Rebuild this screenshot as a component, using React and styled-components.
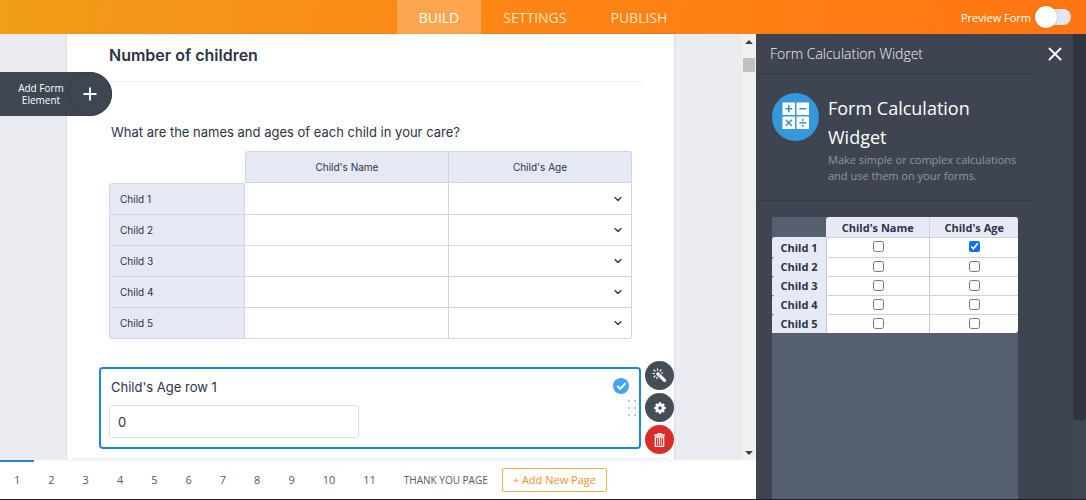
import React, { useState } from 'react';
import styled, { createGlobalStyle } from 'styled-components';
import { Check, ChevronDown, Plus, X } from 'lucide-react';

const GlobalStyle = createGlobalStyle`
  * {
    box-sizing: border-box;
  }

  body {
    margin: 0;
    font-family: 'Open Sans', 'Noto Sans', sans-serif;
    color: #2c3345;
  }

  button, input, select {
    font: inherit;
    color: inherit;
    margin: 0;
  }

  button {
    padding: 0;
    border: 0;
    background: none;
    cursor: pointer;
  }
`;

const Page = styled.div`
  min-height: 100vh;
  display: flex;
  flex-direction: column;
  border-bottom: 1px solid #1b1d2b;
`;

const Header = styled.header`
  display: grid;
  grid-template-columns: 1fr auto 1fr;
  height: 34px;
  padding-right: 15px;
  padding-left: 15px;
  background: linear-gradient(100deg, #f19e1a, #fd8615 45%, #ff7513);
`;

const Tabs = styled.nav`
  display: flex;
  grid-column: 2;
`;

const Tab = styled.a`
  display: flex;
  align-items: center;
  padding: 0 22px;
  font-size: 14px;
  text-decoration: none;
  color: ${({ $active }) => ($active ? '#fff' : '#ffe3c2')};
  background: ${({ $active }) => ($active ? 'rgba(255, 255, 255, 0.25)' : 'transparent')};
`;

const Preview = styled.label`
  display: flex;
  align-items: center;
  justify-content: flex-end;
  gap: 4px;
  font-size: 11px;
  color: #fff;
`;

const Switch = styled.input`
  appearance: none;
  display: flex;
  align-items: center;
  width: 36px;
  height: 16px;
  border-radius: 8px;
  background: #e3e5f0;
  cursor: pointer;

  &::before {
    content: '';
    width: 22px;
    height: 22px;
    flex-shrink: 0;
    border-radius: 50%;
    background: #fff;
    box-shadow: 0 0 2px rgba(0, 0, 0, 0.3);
  }

  &:checked {
    justify-content: flex-end;
    background: #78bb07;
  }
`;

const Workspace = styled.div`
  flex: 1;
  display: flex;
`;

const Builder = styled.main`
  flex: 1;
  display: flex;
  flex-direction: column;
  min-width: 0;
`;

const Canvas = styled.div`
  position: relative;
  flex: 1;
  display: flex;
  background: #ebecf2;
`;

const AddElement = styled.button`
  position: absolute;
  top: 38px;
  left: 0;
  display: flex;
  align-items: center;
  height: 44px;
  border-radius: 0 22px 22px 0;
  background: #3e4652;
  color: #fff;
  font-size: 10px;
  line-height: 12px;
`;

const AddLabel = styled.span`
  width: 68px;
  padding: 0 2px 0 16px;
`;

const AddIcon = styled.span`
  display: flex;
  align-items: center;
  justify-content: center;
  width: 44px;
  height: 44px;
  border: 1px solid #363c48;
  border-radius: 50%;
`;

const Sheet = styled.section`
  flex: 1;
  margin: 0 68px 0 67px;
  padding: 0 5px;
  background: #fff;
  box-shadow: 0 0 2px rgba(60, 65, 100, 0.25);
  font-family: 'Inter', sans-serif;
`;

const SheetTitle = styled.h2`
  margin: 0 25px 0 37px;
  padding: 9px 0 14px;
  border-bottom: 1px solid #f0f0f4;
  font-size: 16px;
  font-weight: 600;
  line-height: 24px;
`;

const Question = styled.div`
  padding: 40px 37px 28px;
`;

const QuestionTitle = styled.h3`
  margin: 0;
  padding: 0 2px 9px;
  font-size: 13px;
  font-weight: 400;
  line-height: 20px;
`;

const Matrix = styled.table`
  width: 100%;
  table-layout: fixed;
  border-collapse: separate;
  border-spacing: 0;
  font-size: 10px;

  th, td {
    height: 31px;
    padding: 0;
    border: 0 solid #d0d4e4;
    border-width: 0 1px 1px 0;
  }

  th {
    font-weight: 400;
    background: #e5e9f5;
  }

  thead th {
    height: 32px;
    border-top-width: 1px;
  }

  thead th:nth-child(2) {
    border-left-width: 1px;
    border-top-left-radius: 3px;
  }

  thead th:last-child {
    border-top-right-radius: 3px;
  }

  tbody th {
    padding-left: 10px;
    border-left-width: 1px;
    text-align: left;
  }

  tbody tr:first-child th {
    height: 32px;
    border-top: 1px solid #d0d4e4;
    border-top-left-radius: 3px;
  }

  tbody tr:last-child th {
    border-bottom-left-radius: 3px;
  }

  tbody tr:last-child td:last-child {
    border-bottom-right-radius: 3px;
  }

  thead td {
    border: 0;
  }
`;

const CellInput = styled.input`
  display: block;
  width: 100%;
  height: 28px;
  padding: 0 10px;
  border: 0;
  background: transparent;
`;

const SelectWrap = styled.div`
  display: grid;
  align-items: center;

  > * {
    grid-area: 1 / 1;
  }

  > svg {
    justify-self: end;
    margin-right: 7px;
    pointer-events: none;
  }
`;

const CellSelect = styled.select`
  appearance: none;
  width: 100%;
  height: 28px;
  padding: 0 10px;
  border: 0;
  background: transparent;
`;

const SelectedField = styled.div`
  position: relative;
  margin: 0 28px 9px 27px;
  padding: 8px 8px 9px;
  border: 2px solid #1c8bcb;
  border-radius: 4px;
`;

const FieldLabel = styled.label`
  display: block;
  padding: 0 2px 8px;
  font-size: 13px;
  line-height: 20px;
`;

const FieldInput = styled.input`
  display: block;
  width: 250px;
  height: 33px;
  padding: 0 8px;
  border: 1px solid #dfdce8;
  border-radius: 3px;
  font-size: 13px;
`;

const Badge = styled.span`
  position: absolute;
  top: 9px;
  right: 10px;
  display: flex;
  align-items: center;
  justify-content: center;
  width: 16px;
  height: 16px;
  border-radius: 50%;
  background: #43a5f8;
  color: #fff;
`;

const DragHandle = styled.svg`
  position: absolute;
  top: 30px;
  right: 2px;
`;

const FieldActions = styled.div`
  position: absolute;
  top: -8px;
  right: -35px;
  display: flex;
  flex-direction: column;
  gap: 3px;
`;

const ActionButton = styled.button`
  display: flex;
  align-items: center;
  justify-content: center;
  width: 29px;
  height: 29px;
  border-radius: 50%;
  color: #fff;
  background: ${({ $danger }) => ($danger ? '#da2c28' : '#454e57')};
`;

const NextLine = styled.hr`
  margin: 0;
  border: 0;
  border-top: 1px solid #e8e9f0;
`;

const ScrollTrack = styled.div`
  display: flex;
  flex-direction: column;
  align-items: center;
  width: 14px;
  padding: 6px 0 5px;
  background: #f0f0f1;
`;

const ScrollThumb = styled.span`
  width: 12px;
  height: 14px;
  margin: 14px 0 auto;
  background: #c1c1c3;
`;

const Arrow = styled.span`
  border: 4px solid transparent;
  border-top: ${({ $up }) => ($up ? '0' : '4px solid #3e3e40')};
  border-bottom: ${({ $up }) => ($up ? '4px solid #3e3e40' : '0')};
`;

const PageBar = styled.nav`
  display: flex;
  align-items: center;
  height: 39px;
  background: #fff;
`;

const PageButton = styled.button`
  height: 100%;
  padding: 0 14px;
  border-top: 2px solid ${({ $active }) => ($active ? '#2a86cf' : 'transparent')};
  border-bottom: 2px solid transparent;
  font-size: ${({ $named }) => ($named ? '10px' : '11px')};
  color: #565a66;
  white-space: nowrap;
`;

const AddPage = styled.button`
  height: 24px;
  padding: 0 10px;
  border: 1px solid #f3ad45;
  border-radius: 2px;
  font-size: 11px;
  line-height: 20px;
  color: #f0931f;
  white-space: nowrap;
`;

const Sidebar = styled.aside`
  display: flex;
  width: 330px;
  background: #3e4550;
  color: #fff;
`;

const SidebarBody = styled.div`
  flex: 1;
  display: flex;
  flex-direction: column;
  min-width: 0;
`;

const SidebarTitle = styled.h2`
  margin: 0;
  padding: 8px 14px 7px;
  border-bottom: 1px solid #353b46;
  font-size: 14px;
  font-weight: 300;
  line-height: 24px;
  color: #f0f2f6;
`;

const CloseColumn = styled.div`
  width: 41px;
  padding: 9px 0 0 12px;
`;

const Intro = styled.div`
  display: flex;
  gap: 9px;
  padding: 19px 14px 16px 16px;
  border-bottom: 1px solid #353b46;
`;

const IntroCopy = styled.div`
  padding-top: 1px;
`;

const IntroTitle = styled.h1`
  margin: 0;
  font-size: 18px;
  font-weight: 400;
  line-height: 29px;
`;

const IntroText = styled.p`
  margin: 0;
  font-size: 11px;
  line-height: 16px;
  color: #8f96a1;
`;

const Picker = styled.div`
  flex: 1;
  margin: 16px 14px 0 16px;
  background: #555f6f;
`;

const PickerTable = styled.table`
  width: 100%;
  table-layout: fixed;
  border-spacing: 0;
  font-size: 11px;
  line-height: 15px;
  color: #2c3345;

  th, td {
    height: 19px;
    padding: 0;
    text-align: center;
  }

  th {
    background: #e7eaf6;
    font-weight: 700;
  }

  thead th {
    height: 20px;
  }

  thead th:nth-child(2) {
    border-top-left-radius: 3px;
  }

  thead th:last-child {
    border-left: 1px solid #d0d4e0;
    border-top-right-radius: 3px;
  }

  tbody th {
    border-top-left-radius: 3px;
  }

  tbody tr:first-child th {
    height: 20px;
  }

  tbody td {
    border-top: 1px solid #d0d2da;
    border-left: 1px solid #c6c9d3;
    background: #fff;
  }

  tbody tr:last-child td:last-child {
    border-bottom-right-radius: 3px;
  }
`;

const Tick = styled.input`
  display: block;
  width: 11px;
  height: 11px;
  margin: 0 auto 2px;
  accent-color: #0d6efd;
`;

const SidebarScroll = styled.div`
  width: 13px;
  background: #3d4651;

  &::before {
    content: '';
    display: block;
    height: 83%;
    border-radius: 0 0 3px 3px;
    background: #30343e;
  }
`;

const LogoSvg = styled.svg`
  flex-shrink: 0;
`;

const CalculatorLogo = () => (
  <LogoSvg width="47" height="48" viewBox="0 0 47 48" aria-hidden="true">
    <ellipse cx="23.5" cy="24" rx="23.5" ry="24" fill="#3598db" />
    <path d="M10.5 9.5h12.5v12.5H10.5zM24.5 9.5h12.5v12.5H24.5zM10.5 23.5h12.5v12.5H10.5zM24.5 23.5h12.5v12.5H24.5z" fill="#fff" />
    <path
      d="M16.8 12.3v7M13.3 15.8h7M27.3 15.8h7M13.8 26.8l6 6M19.8 26.8l-6 6M27.3 29.8h7"
      stroke="#3d8fca"
      strokeWidth="1.6"
      fill="none"
    />
    <circle cx="30.8" cy="26.9" r="1" fill="#3d8fca" />
    <circle cx="30.8" cy="32.7" r="1" fill="#3d8fca" />
  </LogoSvg>
);

const WandIcon = () => (
  <svg width="15" height="15" viewBox="0 0 15 15" fill="none" stroke="#fff" aria-hidden="true">
    <path d="M5.8 5.8L12.6 12.4" strokeWidth="3.2" strokeLinecap="round" />
    <path d="M6.6 8.2L8.2 6.6" stroke="#454e57" strokeWidth="0.7" />
    <path
      d="M5.5 .8v1.4M.9 5.5h1.4M2 2l1 1M9 2L8 3M2 9l1-1M5 9.2v1.2M9.4 5h1.2"
      strokeWidth="1.2"
      strokeLinecap="round"
    />
  </svg>
);

const GearIcon = () => (
  <svg width="12" height="12" viewBox="0 0 12 12" aria-hidden="true">
    <circle cx="6" cy="6" r="3.1" fill="none" stroke="#fff" strokeWidth="2.8" />
    <path
      d="M6 .3v2M6 9.7v2M.3 6h2M9.7 6h2M2 2l1.3 1.3M8.7 8.7L10 10M2 10l1.3-1.3M8.7 3.3L10 2"
      stroke="#fff"
      strokeWidth="2.4"
    />
  </svg>
);

const TrashIcon = () => (
  <svg width="11" height="14" viewBox="0 0 11 14" fill="none" stroke="#fff" aria-hidden="true">
    <path d="M3.5 .6h4" strokeWidth="1.2" />
    <path d="M.3 2h10.4" strokeWidth="1.6" />
    <path d="M1.4 4v9.3h8.2V4z" strokeWidth="1.3" />
    <path d="M3.7 5v7M5.5 5v7M7.3 5v7" strokeWidth="0.8" />
  </svg>
);

const children = ['Child 1', 'Child 2', 'Child 3', 'Child 4', 'Child 5'];
const columns = ["Child's Name", "Child's Age"];
const pages = ['1', '2', '3', '4', '5', '6', '7', '8', '9', '10', '11'];

const ChildrenQuestion = () => (
  <Question>
    <QuestionTitle id="children-title">What are the names and ages of each child in your care?</QuestionTitle>
    <Matrix aria-labelledby="children-title">
      <colgroup>
        <col style={{ width: '26%' }} />
        <col style={{ width: '39%' }} />
        <col />
      </colgroup>
      <thead>
        <tr>
          <td />
          {columns.map(column => (
            <th key={column} scope="col">{column}</th>
          ))}
        </tr>
      </thead>
      <tbody>
        {children.map(child => (
          <tr key={child}>
            <th scope="row">{child}</th>
            <td>
              <CellInput type="text" aria-label={`${child} name`} />
            </td>
            <td>
              <SelectWrap>
                <CellSelect aria-label={`${child} age`}>
                  <option value="" />
                </CellSelect>
                <ChevronDown size={12} strokeWidth={2.5} />
              </SelectWrap>
            </td>
          </tr>
        ))}
      </tbody>
    </Matrix>
  </Question>
);

const AgeField = () => (
  <SelectedField>
    <FieldLabel htmlFor="age-row-1">Child's Age row 1</FieldLabel>
    <FieldInput id="age-row-1" type="text" defaultValue="0" />
    <Badge>
      <Check size={11} strokeWidth={4} />
    </Badge>
    <DragHandle width="10" height="18" viewBox="0 0 10 18" fill="#b3b7c4" aria-hidden="true">
      <circle cx="2" cy="2" r="1" />
      <circle cx="8" cy="2" r="1" />
      <circle cx="2" cy="9" r="1" />
      <circle cx="8" cy="9" r="1" />
      <circle cx="2" cy="16" r="1" />
      <circle cx="8" cy="16" r="1" />
    </DragHandle>
    <FieldActions>
      <ActionButton type="button" aria-label="Wizard">
        <WandIcon />
      </ActionButton>
      <ActionButton type="button" aria-label="Properties">
        <GearIcon />
      </ActionButton>
      <ActionButton type="button" aria-label="Delete" $danger>
        <TrashIcon />
      </ActionButton>
    </FieldActions>
  </SelectedField>
);

const WidgetSidebar = () => {
  const [selected, setSelected] = useState(["Child 1 Child's Age"]);

  const toggle = key => {
    setSelected(prev => (prev.includes(key) ? prev.filter(item => item !== key) : [...prev, key]));
  };

  return (
    <Sidebar>
      <SidebarBody>
        <SidebarTitle>Form Calculation Widget</SidebarTitle>
        <Intro>
          <CalculatorLogo />
          <IntroCopy>
            <IntroTitle>Form Calculation Widget</IntroTitle>
            <IntroText>Make simple or complex calculations and use them on your forms.</IntroText>
          </IntroCopy>
        </Intro>
        <Picker>
          <PickerTable>
            <colgroup>
              <col style={{ width: '22%' }} />
              <col style={{ width: '42%' }} />
              <col />
            </colgroup>
            <thead>
              <tr>
                <td />
                {columns.map(column => (
                  <th key={column} scope="col">{column}</th>
                ))}
              </tr>
            </thead>
            <tbody>
              {children.map(child => (
                <tr key={child}>
                  <th scope="row">{child}</th>
                  {columns.map(column => {
                    const key = `${child} ${column}`;
                    return (
                      <td key={key}>
                        <Tick
                          type="checkbox"
                          aria-label={key}
                          checked={selected.includes(key)}
                          onChange={() => toggle(key)}
                        />
                      </td>
                    );
                  })}
                </tr>
              ))}
            </tbody>
          </PickerTable>
        </Picker>
      </SidebarBody>
      <CloseColumn>
        <button type="button" aria-label="Close">
          <X size={22} strokeWidth={2} />
        </button>
      </CloseColumn>
      <SidebarScroll />
    </Sidebar>
  );
};

const App = () => (
  <>
    <GlobalStyle />
    <Page>
      <Header>
        <Tabs>
          <Tab href="#build" $active>BUILD</Tab>
          <Tab href="#settings">SETTINGS</Tab>
          <Tab href="#publish">PUBLISH</Tab>
        </Tabs>
        <Preview>
          Preview Form
          <Switch type="checkbox" role="switch" />
        </Preview>
      </Header>
      <Workspace>
        <Builder>
          <Canvas>
            <Sheet>
              <SheetTitle>Number of children</SheetTitle>
              <ChildrenQuestion />
              <AgeField />
              <NextLine />
            </Sheet>
            <ScrollTrack>
              <Arrow $up />
              <ScrollThumb />
              <Arrow />
            </ScrollTrack>
            <AddElement type="button">
              <AddLabel>Add Form Element</AddLabel>
              <AddIcon>
                <Plus size={20} strokeWidth={2.2} />
              </AddIcon>
            </AddElement>
          </Canvas>
          <PageBar>
            {pages.map((page, index) => (
              <PageButton key={page} type="button" $active={index === 0}>{page}</PageButton>
            ))}
            <PageButton type="button" $named>THANK YOU PAGE</PageButton>
            <AddPage type="button">+ Add New Page</AddPage>
          </PageBar>
        </Builder>
        <WidgetSidebar />
      </Workspace>
    </Page>
  </>
);

export default App;
